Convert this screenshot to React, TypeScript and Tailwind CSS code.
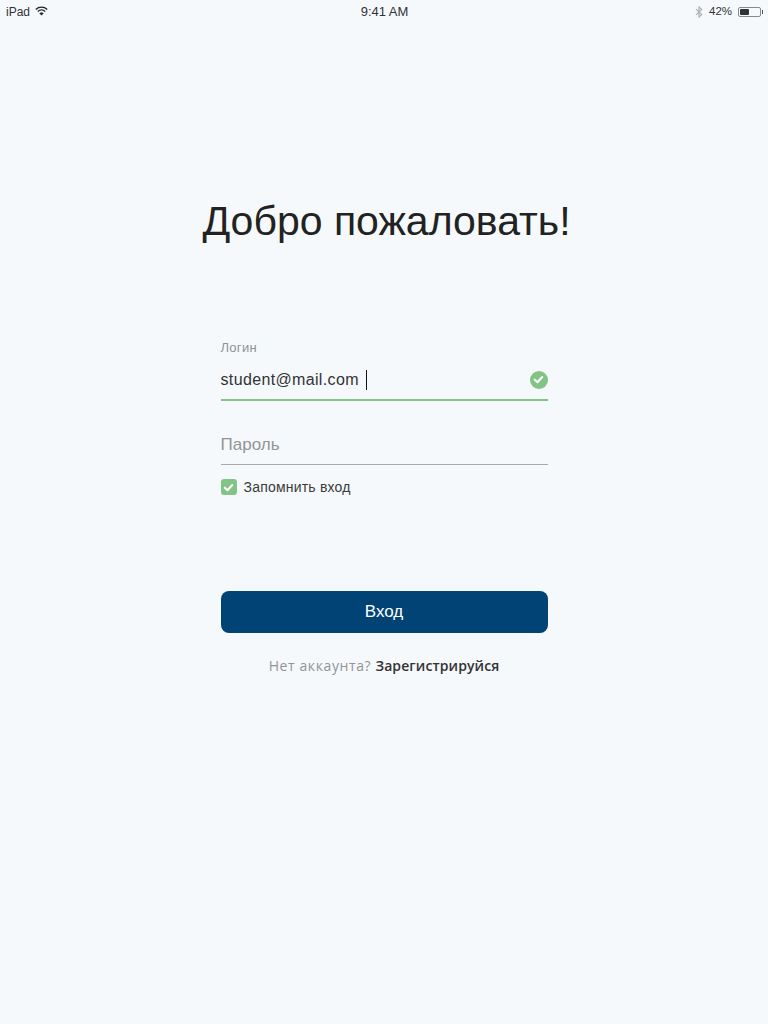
import React from "react"

function Wifi() {
  return (
    <svg width="13" height="10" viewBox="0 0 13 10" className="text-[#222]" fill="none" stroke="currentColor">
      <path d="M0.8 3.4 C4 0.4 9 0.4 12.2 3.4" strokeWidth="1.4" />
      <path d="M2.8 5.4 C4.9 3.5 8.1 3.5 10.2 5.4" strokeWidth="1.4" />
      <path d="M4.7 7.3 C5.7 6.4 7.3 6.4 8.3 7.3 L6.5 9.2 Z" fill="currentColor" strokeWidth="0.6" />
    </svg>
  )
}

function Bluetooth() {
  return (
    <svg width="8" height="12" viewBox="0 0 8 12" fill="none" stroke="#a9abad" strokeWidth="1.1">
      <path d="M1 3.2 L6.8 8.4 L4 11 V1 L6.8 3.6 L1 8.8" />
    </svg>
  )
}

function Battery() {
  return (
    <div className="flex items-center">
      <div className="w-[23px] h-[10px] border border-[#8a8a8a] rounded-[2px] p-px">
        <div className="w-[9px] h-full bg-[#333] rounded-[1px]" />
      </div>
      <div className="w-px h-[4px] bg-[#555] ml-px" />
    </div>
  )
}

function Check({ size }: { size: number }) {
  return (
    <svg width={size} height={size} viewBox="0 0 10 10" fill="none" stroke="#fff" strokeWidth="1.9" strokeLinecap="round" strokeLinejoin="round">
      <path d="M1.6 5.2 L4 7.5 L8.4 2.8" />
    </svg>
  )
}

export default function App() {
  return (
    <div className="min-h-[1024px] bg-[#f5f9fc] font-['Liberation_Sans',Arial,sans-serif] text-[#2b2b2b] flex flex-col items-center">
      {/* Status bar */}
      <div className="w-full h-[24px] pl-[6px] pr-[5px] flex items-center justify-between text-[12px] text-[#333]">
        <div className="flex-1 flex items-center gap-[5px]">
          <span>iPad</span>
          <div className="-mt-[3px]"><Wifi /></div>
        </div>
        <span className="text-[13px]">9:41 AM</span>
        <div className="flex-1 flex items-center justify-end gap-[6px]">
          <Bluetooth />
          <span className="text-[11.5px]">42%</span>
          <Battery />
        </div>
      </div>

      <h1 className="mt-[171px] ml-[5px] text-[41px] leading-[52px] text-[#222]">Добро пожаловать!</h1>

      <div className="mt-[94px] w-[327px] flex flex-col">
        <label className="text-[13px] leading-[14px] tracking-[0.3px] text-[#8e9195]">Логин</label>
        <div className="mt-[9px] h-[37px] pb-[4px] flex items-center border-b-2 border-[#82c485] text-[16px] tracking-[0.35px]">
          <span className="text-[#333]">student@mail.com</span>
          <div className="ml-[7px] w-px h-[20px] bg-[#111]" />
          <div className="ml-auto w-[18px] h-[18px] rounded-full bg-[#82c485] flex items-center justify-center">
            <Check size={11} />
          </div>
        </div>

        <div className="mt-[26px] h-[38px] pb-[2px] flex items-center border-b border-[#a8aaac] text-[17px] text-[#929497]">Пароль</div>

        <div className="mt-[14px] flex items-center gap-[7px]">
          <div className="w-[16px] h-[16px] rounded-[3px] bg-[#82c485] flex items-center justify-center">
            <Check size={11} />
          </div>
          <span className="text-[14px] leading-[16px] tracking-[0.2px] text-[#3a3a3a]">Запомнить вход</span>
        </div>

        <button className="mt-[96px] h-[42px] rounded-[8px] bg-[#014375] text-white text-[17px]">Вход</button>

        <p className="mt-[24px] text-center text-[14px] leading-[18px] tracking-[0.6px] font-['Open_Sans',sans-serif] text-[#929497]">
          Нет аккаунта? <span className="font-semibold tracking-[0.1px] text-[#333]">Зарегистрируйся</span>
        </p>
      </div>
    </div>
  )
}
